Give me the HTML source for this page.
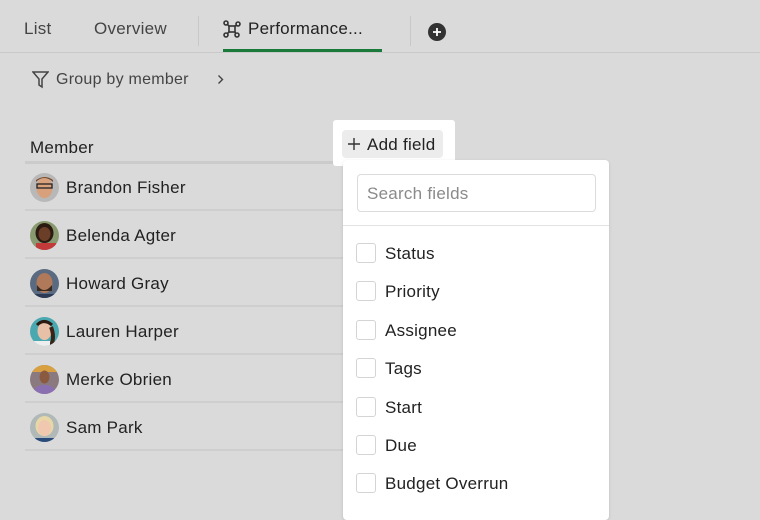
<!DOCTYPE html>
<html><head><meta charset="utf-8"><style>
*{margin:0;padding:0;box-sizing:border-box}
body{width:760px;height:508px;background:#dadada;font-family:"Liberation Sans",sans-serif;color:#222;position:relative;overflow:hidden;letter-spacing:0.25px}
.abs{position:absolute}
.tab{position:absolute;top:19px;font-size:17px;color:#444}
.row{position:absolute;left:25px;width:318px;height:48px;border-bottom:2px solid #cecece}
.row .av{position:absolute;left:5px;top:10px;width:29px;height:29px;border-radius:50%;overflow:hidden}
.row .nm{position:absolute;left:41px;top:15px;font-size:17px;color:#222}
.item{position:absolute;left:356px;height:20px;font-size:17px;color:#222}
.item .cb{position:absolute;left:0;top:0;width:20px;height:20px;border:1px solid #d4d4d4;border-radius:3px;background:#fff}
.item span{position:absolute;left:29px;top:1px;white-space:nowrap;line-height:20px}
</style></head><body>
<div class="tab" style="left:24px">List</div>
<div class="tab" style="left:94px">Overview</div>
<div class="abs" style="left:198px;top:16px;width:1px;height:30px;background:#c8c8c8"></div>
<svg class="abs" style="left:223px;top:20px" width="18" height="18" viewBox="0 0 18 18" fill="none" stroke="#333" stroke-width="1.6"><circle cx="3" cy="3" r="2"/><circle cx="15" cy="4" r="2"/><circle cx="3" cy="15" r="2"/><circle cx="14" cy="15" r="2"/><rect x="6" y="6" width="6" height="6"/><path d="M4.5 4.5L6 6M13.5 5.5L12 6M4.5 13.5L6 12M12.5 13.5L12 12"/></svg>
<div class="tab" style="left:248px;color:#222">Performance...</div>
<div class="abs" style="left:223px;top:49px;width:159px;height:3px;background:#1a7a3a"></div>
<div class="abs" style="left:410px;top:16px;width:1px;height:30px;background:#c8c8c8"></div>
<svg class="abs" style="left:428px;top:23px" width="18" height="18" viewBox="0 0 18 18"><circle cx="9" cy="9" r="9" fill="#333"/><path d="M9 5v8M5 9h8" stroke="#fff" stroke-width="1.8"/></svg>
<div class="abs" style="left:0;top:52px;width:760px;height:1px;background:#c9c9c9"></div>
<svg class="abs" style="left:32px;top:71px" width="17" height="18" viewBox="0 0 17 18" fill="none" stroke="#444" stroke-width="1.5"><path d="M1 1h15l-6 7v8l-3-2V8z"/></svg>
<div class="abs" style="left:56px;top:71px;font-size:16px;color:#444">Group by member</div>
<svg class="abs" style="left:217px;top:74px" width="7" height="11" viewBox="0 0 7 11" fill="none" stroke="#444" stroke-width="1.4"><path d="M1.5 1.5l4 4-4 4"/></svg>
<div class="abs" style="left:30px;top:138px;font-size:17px;color:#222">Member</div>
<div class="abs" style="left:25px;top:161px;width:318px;height:3px;background:#cbcbcb"></div>

<div class="row" style="top:163px"><div class="av"><svg width="29" height="29"><rect width="29" height="29" fill="#b8b8b8"/><ellipse cx="14.5" cy="15" rx="8" ry="10" fill="#d9a07c"/><path d="M6 9q8-8 17 0v-2q-8-6-17 0z" fill="#7a4a2a"/><rect x="7" y="11" width="15" height="4" fill="none" stroke="#222" stroke-width="1.3"/></svg></div><div class="nm">Brandon Fisher</div></div>
<div class="row" style="top:211px"><div class="av"><svg width="29" height="29"><rect width="29" height="29" fill="#8a9a70"/><ellipse cx="14.5" cy="12" rx="9" ry="10" fill="#2a1a12"/><ellipse cx="14.5" cy="13" rx="6" ry="7" fill="#6b3e28"/><rect x="6" y="22" width="20" height="9" fill="#c23a3a"/></svg></div><div class="nm">Belenda Agter</div></div>
<div class="row" style="top:259px"><div class="av"><svg width="29" height="29"><rect width="29" height="29" fill="#5a6a80"/><ellipse cx="14.5" cy="14" rx="8" ry="10" fill="#b07a5a"/><path d="M7 16q7 10 15 0v6H7z" fill="#3a2a20"/><rect x="4" y="25" width="21" height="6" fill="#2c3a55"/></svg></div><div class="nm">Howard Gray</div></div>
<div class="row" style="top:307px"><div class="av"><svg width="29" height="29"><rect width="29" height="29" fill="#4aa8b0"/><ellipse cx="14.5" cy="14" rx="7" ry="9" fill="#e8c0a8"/><path d="M7 8q7-7 15 0" stroke="#2a1a12" stroke-width="3" fill="none"/><path d="M21 10q4 10 0 19" stroke="#3a2418" stroke-width="4" fill="none"/><rect x="4" y="24" width="16" height="6" fill="#eee"/></svg></div><div class="nm">Lauren Harper</div></div>
<div class="row" style="top:355px"><div class="av"><svg width="29" height="29"><rect width="29" height="29" fill="#8a7a80"/><rect width="29" height="7" fill="#d8a040"/><ellipse cx="14.5" cy="12" rx="5" ry="6.5" fill="#8a5a40"/><ellipse cx="14.5" cy="28" rx="12" ry="8" fill="#8a70b0"/></svg></div><div class="nm">Merke Obrien</div></div>
<div class="row" style="top:403px"><div class="av"><svg width="29" height="29"><rect width="29" height="29" fill="#b0b8b8"/><ellipse cx="14.5" cy="13" rx="9" ry="10" fill="#e8d8a8"/><ellipse cx="14.5" cy="15" rx="6.5" ry="8" fill="#f0c8b0"/><rect x="5" y="25" width="19" height="6" fill="#2a4a7a"/></svg></div><div class="nm">Sam Park</div></div>

<div class="abs" style="left:333px;top:120px;width:122px;height:46px;background:#fff;border-radius:3px"></div>
<div class="abs" style="left:342px;top:130px;width:101px;height:28px;background:#ececec;border-radius:4px"></div>
<svg class="abs" style="left:347px;top:137px" width="14" height="14" viewBox="0 0 14 14" stroke="#333" stroke-width="1.4"><path d="M7 1v12M1 7h12"/></svg>
<div class="abs" style="left:367px;top:135px;font-size:17px;color:#222">Add field</div>

<div class="abs" style="left:343px;top:160px;width:266px;height:360px;background:#fff;border-radius:4px;box-shadow:0 1px 3px rgba(0,0,0,.12)"></div>
<div class="abs" style="left:357px;top:174px;width:239px;height:38px;border:1px solid #dcdcdc;border-radius:4px;background:#fff"></div>
<div class="abs" style="left:367px;top:184px;font-size:17px;color:#8a8a8a">Search fields</div>
<div class="abs" style="left:343px;top:225px;width:266px;height:1px;background:#e2e2e2"></div>

<div class="item" style="top:243px"><div class="cb"></div><span>Status</span></div>
<div class="item" style="top:281px"><div class="cb"></div><span>Priority</span></div>
<div class="item" style="top:320px"><div class="cb"></div><span>Assignee</span></div>
<div class="item" style="top:358px"><div class="cb"></div><span>Tags</span></div>
<div class="item" style="top:397px"><div class="cb"></div><span>Start</span></div>
<div class="item" style="top:435px"><div class="cb"></div><span>Due</span></div>
<div class="item" style="top:473px"><div class="cb"></div><span>Budget Overrun</span></div>
</body></html>
